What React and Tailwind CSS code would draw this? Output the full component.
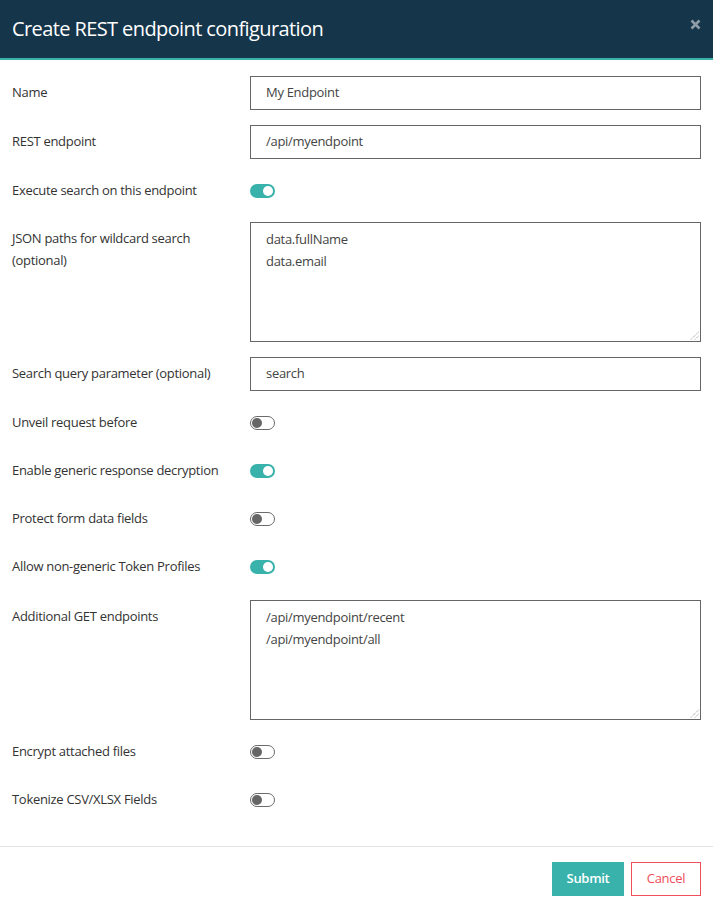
import React from "react";

const font = { fontFamily: '"Open Sans", "Noto Sans", sans-serif' };

function Toggle({ on }) {
  return on ? (
    <div className="relative h-[14px] w-[25px] rounded-full bg-[#38b2ab]">
      <div className="absolute right-[2px] top-[2px] h-[10px] w-[10px] rounded-full bg-white" />
    </div>
  ) : (
    <div className="relative h-[14px] w-[25px] rounded-full border border-[#6b6b6b] bg-white">
      <div className="absolute left-[1px] top-[1px] h-[10px] w-[10px] rounded-full bg-[#666]" />
    </div>
  );
}

function InputRow({ label, value }) {
  return (
    <div className="flex">
      <div className="w-[238px] shrink-0 flex items-center h-[34px]">{label}</div>
      <div className="flex-1 h-[34px] border border-[#666] px-[15px] flex items-center text-[#444]">{value}</div>
    </div>
  );
}

function ToggleRow({ label, on }) {
  return (
    <div className="flex h-[33px] items-center">
      <div className="w-[238px] shrink-0">{label}</div>
      <Toggle on={on} />
    </div>
  );
}

function AreaRow({ label, lines, extra = "" }) {
  return (
    <div className={"flex " + extra}>
      <div className="w-[238px] shrink-0 pt-[5px] leading-[22px] pr-4">{label}</div>
      <div className="relative flex-1 h-[120px] border border-[#666] px-[15px] pt-[5px] leading-[22px] text-[#444]">
        {lines.map((l) => (
          <div key={l}>{l}</div>
        ))}
        <svg className="absolute right-[1px] bottom-[1px]" width="9" height="9" viewBox="0 0 9 9">
          <line x1="8.5" y1="1" x2="1" y2="8.5" stroke="#888" strokeWidth="1" strokeDasharray="1 1" />
          <line x1="8.5" y1="5" x2="5" y2="8.5" stroke="#888" strokeWidth="1" strokeDasharray="1 1" />
        </svg>
      </div>
    </div>
  );
}

export default function App() {
  return (
    <div className="w-[713px] h-[908px] bg-white overflow-hidden text-[13px] tracking-[-0.3px] text-[#333]" style={font}>
      <div className="h-[60px] bg-[#15354a] border-b-[2px] border-[#38b2ab] flex items-center justify-between pl-[12px] pr-[12px]">
        <div className="text-white text-[20px] tracking-[-0.6px] leading-none pb-[1px]">Create REST endpoint configuration</div>
        <svg width="11" height="11" viewBox="0 0 11 11" className="mb-[10px]">
          <path d="M1.5 1.5 L9.5 9.5 M9.5 1.5 L1.5 9.5" stroke="#8d9ca6" strokeWidth="2.6" strokeLinecap="butt" />
        </svg>
      </div>
      <div className="px-[12px] pt-[16px] pb-[30px] flex flex-col gap-[15px]">
        <InputRow label="Name" value="My Endpoint" />
        <InputRow label="REST endpoint" value="/api/myendpoint" />
        <ToggleRow label="Execute search on this endpoint" on />
        <AreaRow label="JSON paths for wildcard search (optional)" lines={["data.fullName", "data.email"]} />
        <InputRow label="Search query parameter (optional)" value="search" />
        <ToggleRow label="Unveil request before" on={false} />
        <ToggleRow label="Enable generic response decryption" on />
        <ToggleRow label="Protect form data fields" on={false} />
        <ToggleRow label="Allow non-generic Token Profiles" on />
        <AreaRow label="Additional GET endpoints" lines={["/api/myendpoint/recent", "/api/myendpoint/all"]} extra="mt-[2px]" />
        <ToggleRow label="Encrypt attached files" on={false} />
        <ToggleRow label="Tokenize CSV/XLSX Fields" on={false} />
      </div>
      <div className="border-t border-[#e3e3e3] flex justify-end gap-[7px] px-[12px] pt-[15px]">
        <button className="h-[34px] w-[72px] bg-[#38b2ab] text-white font-semibold">Submit</button>
        <button className="h-[34px] w-[70px] border border-[#f04e5a] text-[#f04e5a] bg-white">Cancel</button>
      </div>
    </div>
  );
}
